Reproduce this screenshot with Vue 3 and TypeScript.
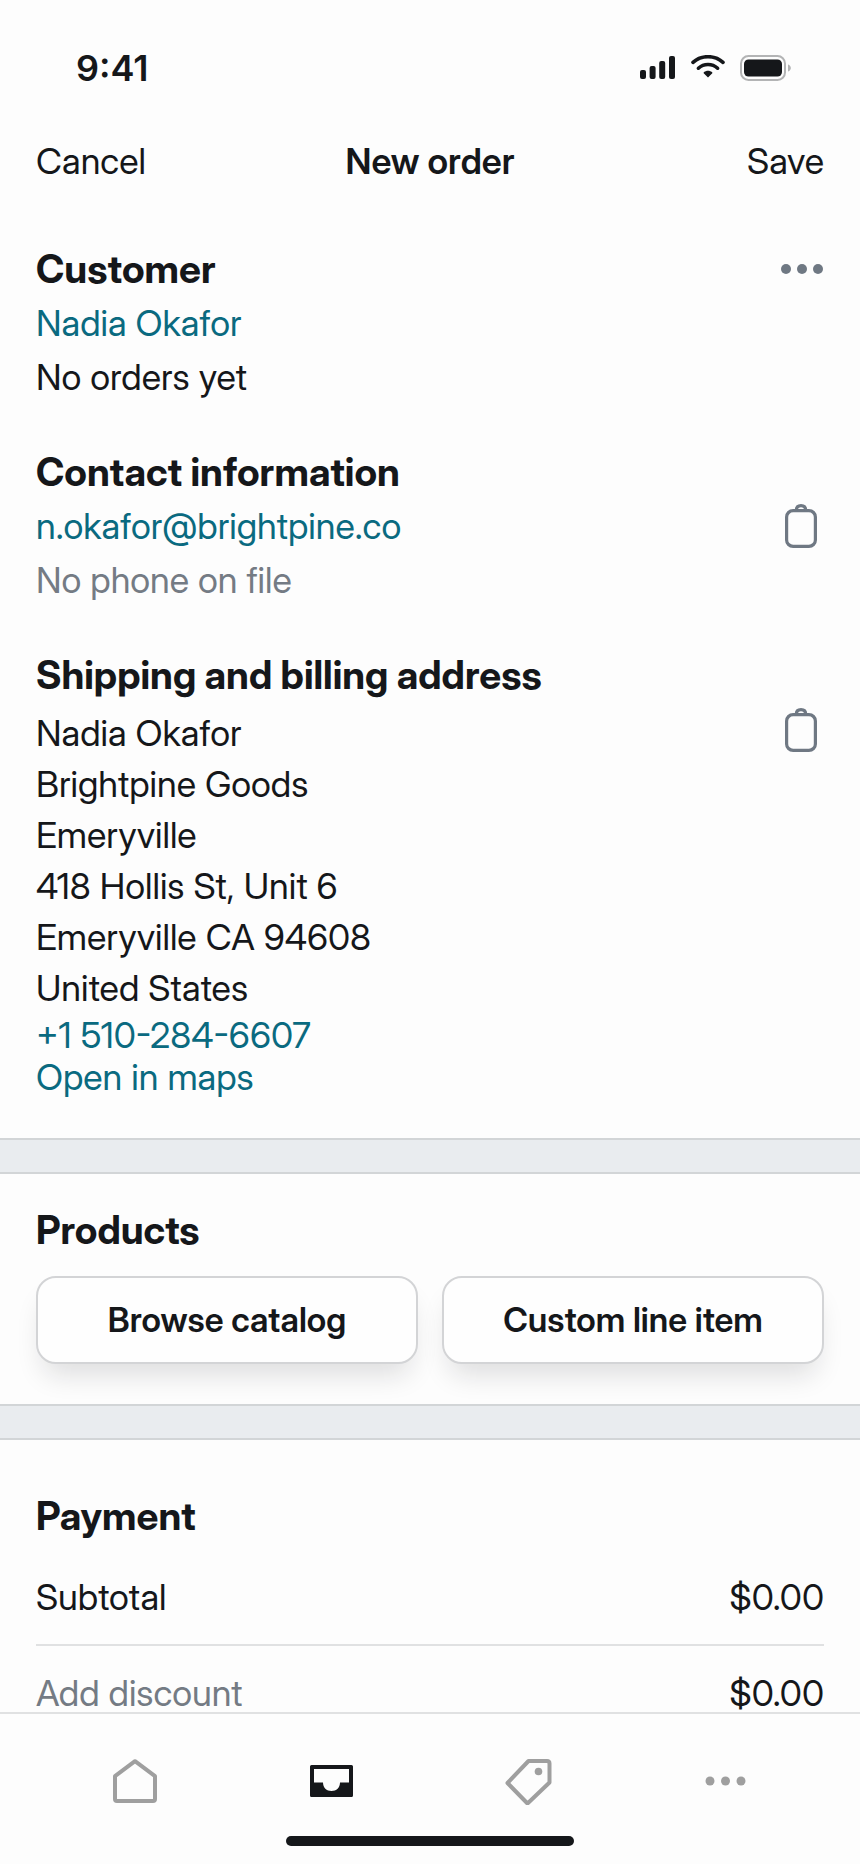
<script setup lang="ts">
interface TotalRow {
  label: string
  amount: string
  action: boolean
}

const addressLines: string[] = [
  'Nadia Okafor',
  'Brightpine Goods',
  'Emeryville',
  '418 Hollis St, Unit 6',
  'Emeryville CA 94608',
  'United States',
]

const totals: TotalRow[] = [
  { label: 'Subtotal', amount: '$0.00', action: false },
  { label: 'Add discount', amount: '$0.00', action: true },
]
</script>

<template>
  <div class="screen">
    <div class="status">
      <span class="time">9:41</span>
      <div class="indicators">
        <svg width="36" height="26" viewBox="0 0 36 26" aria-hidden="true">
          <rect x="0" y="15" width="6" height="9" rx="2" />
          <rect x="9.6" y="11" width="6" height="13" rx="2" />
          <rect x="19.2" y="6" width="6" height="18" rx="2" />
          <rect x="29" y="1" width="6" height="23" rx="2" />
        </svg>
        <svg width="34" height="26" viewBox="0 0 34 26" aria-hidden="true">
          <g fill="none" stroke="currentColor" stroke-width="3.6" stroke-linecap="round">
            <path d="M2 7.4C10.2-.2 23.8-.2 32 7.4" />
            <path d="M7.4 13.2C12.8 8.2 21.2 8.2 26.6 13.2" />
          </g>
          <path d="M17 22.5L12.7 18.2Q12.3 17.7 12.9 17.2C15.3 15.2 18.7 15.2 21.1 17.2Q21.7 17.7 21.3 18.2Z" />
        </svg>
        <svg width="52" height="26" viewBox="0 0 52 26" aria-hidden="true">
          <rect x="1" y="1" width="44" height="24" rx="7.5" fill="none" stroke="#b3b4b5" stroke-width="2" />
          <rect x="4" y="4.5" width="38" height="17" rx="4.5" />
          <path d="M48 9.5C51.8 10.8 51.8 15.2 48 16.5Z" fill="#b3b4b5" />
        </svg>
      </div>
    </div>

    <header class="bar">
      <button type="button" class="plain">Cancel</button>
      <h1>New order</h1>
      <button type="button" class="plain end">Save</button>
    </header>

    <main class="content">
      <div class="details">
        <section>
          <div class="line">
            <h2>Customer</h2>
            <button type="button" class="icon" aria-label="Customer options">
              <svg width="44" height="12" viewBox="0 0 44 12" aria-hidden="true">
                <circle cx="6" cy="6" r="5" /><circle cx="22" cy="6" r="5" /><circle cx="38" cy="6" r="5" />
              </svg>
            </button>
          </div>
          <a href="#customer">Nadia Okafor</a>
          <p>No orders yet</p>
        </section>

        <section>
          <h2>Contact information</h2>
          <div class="line">
            <a href="mailto:n.okafor@brightpine.co">n.okafor@brightpine.co</a>
            <button type="button" class="icon clip" aria-label="Copy email">
              <svg width="32" height="44" viewBox="0 0 32 44" aria-hidden="true">
                <rect x="1.6" y="6.6" width="28.8" height="35.8" rx="6.5" />
                <path d="M11.3 6.3C11.3 3 13 1.6 16 1.6S20.7 3 20.7 6.3" />
              </svg>
            </button>
          </div>
          <p class="muted">No phone on file</p>
        </section>

        <section>
          <h2>Shipping and billing address</h2>
          <div class="line top">
            <address>
              <span v-for="item in addressLines" :key="item">{{ item }}</span>
              <a href="tel:+15102846607">+1 510-284-6607</a>
              <a href="#maps">Open in maps</a>
            </address>
            <button type="button" class="icon clip" aria-label="Copy address">
              <svg width="32" height="44" viewBox="0 0 32 44" aria-hidden="true">
                <rect x="1.6" y="6.6" width="28.8" height="35.8" rx="6.5" />
                <path d="M11.3 6.3C11.3 3 13 1.6 16 1.6S20.7 3 20.7 6.3" />
              </svg>
            </button>
          </div>
        </section>
      </div>

      <div class="band"></div>

      <section class="products">
        <h2>Products</h2>
        <div class="choices">
          <button type="button">Browse catalog</button>
          <button type="button">Custom line item</button>
        </div>
      </section>

      <div class="band"></div>

      <section class="payment">
        <h2>Payment</h2>
        <div v-for="row in totals" :key="row.label" class="total">
          <button v-if="row.action" type="button" class="plain muted">{{ row.label }}</button>
          <span v-else>{{ row.label }}</span>
          <span>{{ row.amount }}</span>
        </div>
      </section>
    </main>

    <footer class="dock">
      <nav class="tabs" aria-label="Main">
        <a href="#home" aria-label="Home">
          <svg width="48" height="48" viewBox="0 0 48 48" aria-hidden="true">
            <path class="outline" d="M24 4.2L44 19.2V42Q44 44 42 44H6Q4 44 4 42V19.2Z" />
          </svg>
        </a>
        <a href="#orders" class="active" aria-label="Orders" aria-current="page">
          <svg width="48" height="48" viewBox="0 0 48 48" aria-hidden="true">
            <path fill-rule="evenodd" d="M3.5 8H43.5Q45 8 45 9.5V38.5Q45 40 43.5 40H3.5Q2 40 2 38.5V9.5Q2 8 3.5 8ZM6 12V25.5H15C15 30.5 18.5 34 23.5 34S32 30.5 32 25.5H41V12Z" />
          </svg>
        </a>
        <a href="#products" aria-label="Products">
          <svg width="48" height="48" viewBox="0 0 48 48" aria-hidden="true">
            <path class="outline" d="M23.5 4H42Q44.5 4 44.5 6.5V25.5L22.5 46.5L2.5 26Z" />
            <circle cx="33.5" cy="14.5" r="3.8" />
          </svg>
        </a>
        <a href="#more" aria-label="More">
          <svg width="48" height="48" viewBox="0 0 48 48" aria-hidden="true">
            <circle cx="8" cy="24" r="4.5" /><circle cx="23.5" cy="24" r="4.5" /><circle cx="39" cy="24" r="4.5" />
          </svg>
        </a>
      </nav>
      <div class="handle"></div>
    </footer>
  </div>
</template>

<style>
body {
  margin: 0;
  background: #fdfdfd;
}
</style>

<style scoped>
.screen {
  display: flex;
  flex-direction: column;
  height: 100vh;
  overflow: hidden;
  background: #fdfdfd;
  color: #15171a;
  font-family: "Inter Display", Inter, "Liberation Sans", sans-serif;
  font-size: 36px;
  line-height: 54px;
}
h1,
h2,
p {
  margin: 0;
}
h1 {
  font-size: 36px;
  font-weight: 600;
  text-align: center;
}
h2 {
  font-size: 39px;
  font-weight: 700;
}
svg {
  display: block;
  fill: currentColor;
}
button {
  padding: 0;
  border: 0;
  background: none;
  color: inherit;
  font: inherit;
  cursor: pointer;
}
a {
  color: #0a6a80;
  text-decoration: none;
}
.plain {
  text-align: left;
}
.end {
  text-align: right;
}
.muted {
  color: #747b84;
}
.status {
  flex: none;
  display: flex;
  align-items: center;
  justify-content: space-between;
  box-sizing: border-box;
  height: 112px;
  padding: 24px 68px 0 76px;
}
.time {
  font-family: Inter, "Liberation Sans", sans-serif;
  font-size: 36px;
  font-weight: 600;
}
.indicators {
  display: flex;
  align-items: center;
  gap: 15px;
}
.bar {
  flex: none;
  display: grid;
  grid-template-columns: 1fr auto 1fr;
  align-items: center;
  height: 98px;
  padding: 0 36px;
}
.content {
  flex: 1;
  min-height: 0;
  overflow-y: auto;
  scrollbar-width: none;
}
.details {
  display: flex;
  flex-direction: column;
  gap: 41px;
  padding: 32px 36px 40px;
}
.line {
  display: flex;
  align-items: center;
  justify-content: space-between;
}
.line.top {
  align-items: flex-start;
  padding-top: 6px;
}
.icon {
  display: flex;
  align-items: center;
  height: 54px;
  color: #6f7883;
}
.clip {
  margin-right: 7px;
}
.clip svg {
  fill: none;
  stroke: currentColor;
  stroke-width: 3.2;
}
.line.top .clip {
  height: 44px;
}
address {
  display: flex;
  flex-direction: column;
  font-style: normal;
  line-height: 51px;
}
address a {
  line-height: 42px;
}
.band {
  box-sizing: border-box;
  height: 36px;
  border-top: 2px solid #d2d5d7;
  border-bottom: 2px solid #d2d5d7;
  background: #e9ecef;
}
.products {
  padding: 29px 36px 40px;
}
.choices {
  display: grid;
  grid-template-columns: 1fr 1fr;
  gap: 24px;
  margin-top: 19px;
}
.choices button {
  height: 88px;
  border: 2px solid #d3d4d6;
  border-radius: 20px;
  background: #fefefe;
  box-shadow: 0 18px 28px -8px rgba(20, 22, 26, 0.14);
  font-size: 34px;
  font-weight: 600;
}
.payment {
  padding: 49px 36px 40px;
}
.payment h2 {
  margin-bottom: 7px;
}
.total {
  display: flex;
  justify-content: space-between;
  padding: 20px 0;
}
.total + .total {
  border-top: 2px solid #e0e1e2;
}
.dock {
  flex: none;
  border-top: 2px solid #e0e1e2;
  background: #fdfdfd;
}
.tabs {
  display: grid;
  grid-template-columns: repeat(4, 1fr);
  height: 122px;
  padding: 0 36px;
  box-sizing: border-box;
}
.tabs a {
  display: flex;
  align-items: center;
  justify-content: center;
  padding-top: 12px;
  color: #9f9f9f;
}
.tabs .active {
  color: #15171a;
}
.outline {
  fill: none;
  stroke: currentColor;
  stroke-width: 4;
  stroke-linejoin: round;
}
.handle {
  width: 33.5%;
  height: 10px;
  margin: 0 auto 18px;
  border-radius: 5px;
  background: #15171a;
}
</style>
